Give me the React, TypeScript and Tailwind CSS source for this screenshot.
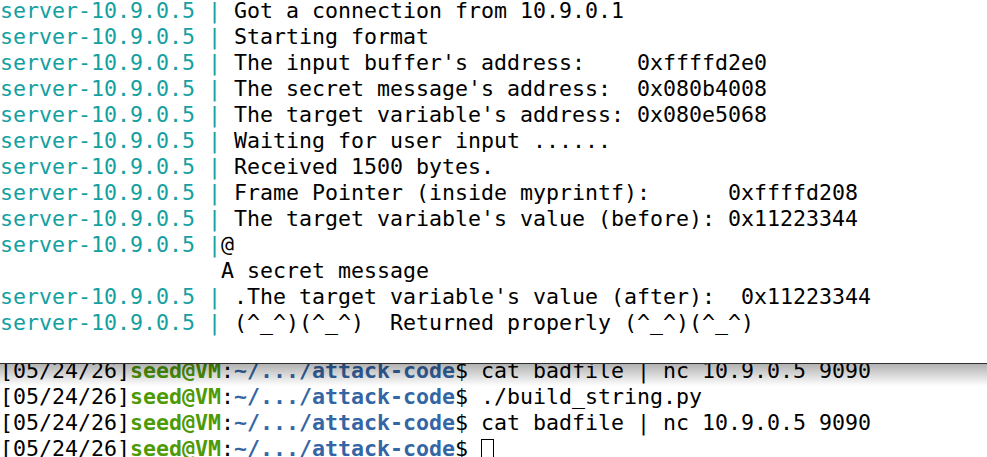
import React from "react";

const top: { p?: boolean; t: string; at?: boolean }[] = [
  { p: true, t: " Got a connection from 10.9.0.1" },
  { p: true, t: " Starting format" },
  { p: true, t: " The input buffer's address:    0xffffd2e0" },
  { p: true, t: " The secret message's address:  0x080b4008" },
  { p: true, t: " The target variable's address: 0x080e5068" },
  { p: true, t: " Waiting for user input ......" },
  { p: true, t: " Received 1500 bytes." },
  { p: true, t: " Frame Pointer (inside myprintf):      0xffffd208" },
  { p: true, t: " The target variable's value (before): 0x11223344" },
  { p: true, t: "@" },
  { p: false, t: "                 A secret message" },
  { p: true, t: " .The target variable's value (after):  0x11223344" },
  { p: true, t: " (^_^)(^_^)  Returned properly (^_^)(^_^)" },
];

const bottom = [
  "cat badfile | nc 10.9.0.5 9090",
  "./build_string.py",
  "cat badfile | nc 10.9.0.5 9090",
  "",
];

export default function App() {
  return (
    <div
      className="w-[987px] h-[457px] overflow-hidden bg-white text-black flex flex-col"
      style={{ fontFamily: "'DejaVu Sans Mono', monospace" }}
    >
      <div className="h-[364px] shrink-0 border-b border-[#2e2e2e] overflow-hidden relative z-10 bg-white">
        <div className="mt-[-2px] text-[21.6px] leading-[26px] whitespace-pre">
          {top.map((l, i) => (
            <div key={i} className="h-[26px]">
              {l.p ? <span className="text-[#13a0a0]">server-10.9.0.5 |</span> : null}
              <span>{l.t}</span>
            </div>
          ))}
        </div>
      </div>
      <div className="relative flex-1 overflow-hidden">
        <div className="mt-[-6px] text-[21.6px] leading-[26px] whitespace-pre">
          {bottom.map((c, i) => (
            <div key={i} className="h-[26px] flex">
              <span>[05/24/26]</span>
              <span className="text-[#4e9a06] font-bold">seed@VM</span>
              <span>:</span>
              <span className="text-[#3465a4] font-bold">~/.../attack-code</span>
              <span>$ </span>
              <span>{c}</span>
              {i === 3 ? (
                <span className="inline-block w-[13px] h-[21px] mt-[3px] border border-black" />
              ) : null}
            </div>
          ))}
        </div>
        <div className="absolute left-0 right-0 top-0 h-[22px] bg-gradient-to-b from-[rgba(0,0,0,0.3)] to-[rgba(0,0,0,0)]" />
      </div>
    </div>
  );
}
